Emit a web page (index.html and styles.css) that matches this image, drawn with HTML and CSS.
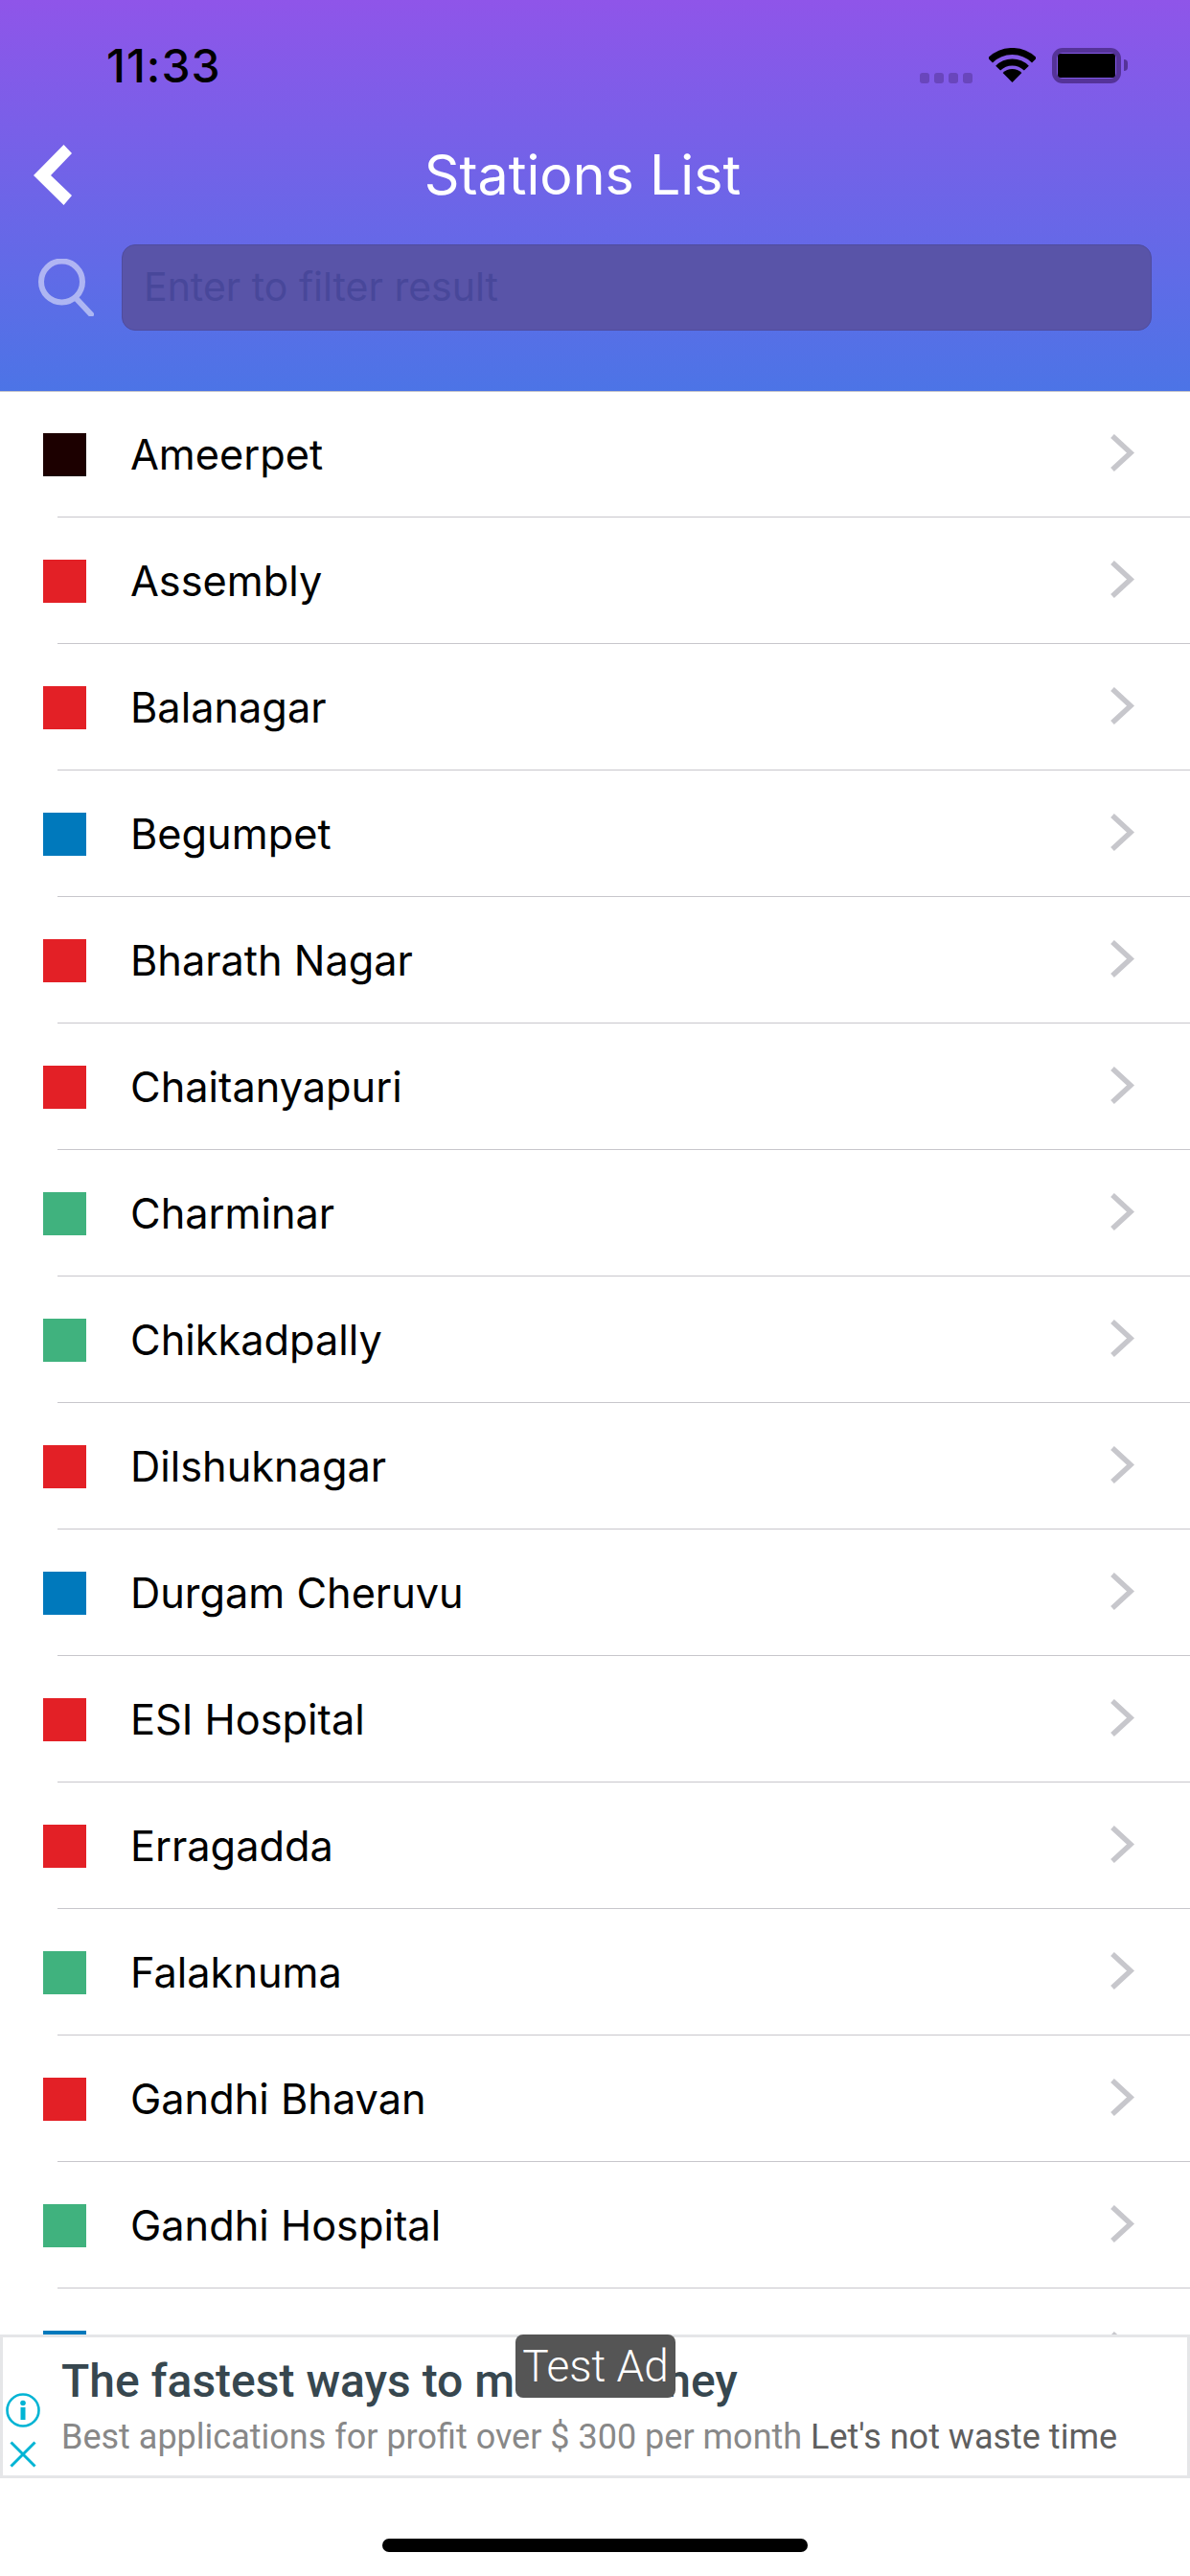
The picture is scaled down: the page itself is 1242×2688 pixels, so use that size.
FILE: index.html
```html
<!DOCTYPE html>
<html lang="en">

<head>
    <meta charset="UTF-8" />
    <meta name="viewport" content="width=device-width, initial-scale=1" />
    <title>Stations List</title>
    <link rel="stylesheet" href="styles.css">
</head>

<body>
    <div class="screen">
        <header class="top">
            <div class="status">
                <span class="time">11:33</span>
                <div class="status-icons">
                    <div class="signal"><i></i><i></i><i></i><i></i></div>
                    <svg class="wifi" width="49" height="36" viewBox="0 0 49 36">
                        <path d="M1.5 13A32.5 32.5 0 0 1 47.5 13" fill="none" stroke="#000" stroke-width="7" />
                        <path d="M9.65 21.15A21 21 0 0 1 39.35 21.15" fill="none" stroke="#000" stroke-width="7" />
                        <path d="M24.5 36L14.6 26.1A14 14 0 0 1 34.4 26.1Z" fill="#000" />
                    </svg>
                    <div class="battery"><div class="battery-fill"></div></div>
                    <div class="battery-nub"></div>
                </div>
            </div>

            <div class="nav">
                <svg class="back" width="40" height="63" viewBox="0 0 40 63">
                    <polygon points="31.5,0 40,9 18,32 40,53 31.5,63 0,32" fill="#fff" />
                </svg>
                <h1>Stations List</h1>
            </div>

            <div class="search">
                <svg class="search-icon" width="58" height="60" viewBox="0 0 58 60">
                    <circle cx="24.5" cy="24" r="21.5" fill="none" stroke="#fff" stroke-width="6" />
                    <path d="M40 42L55 58" fill="none" stroke="#fff" stroke-width="6" stroke-linecap="round" />
                </svg>
                <input type="text" placeholder="Enter to filter result" />
            </div>
        </header>

        <ul class="list">
            <li class="row"><span class="line line-dark"></span><span class="name">Ameerpet</span><svg class="arrow" width="26" height="40" viewBox="0 0 26 40"><path d="M3 2L22 19.5L3 37" /></svg></li>
            <li class="row"><span class="line line-red"></span><span class="name">Assembly</span><svg class="arrow" width="26" height="40" viewBox="0 0 26 40"><path d="M3 2L22 19.5L3 37" /></svg></li>
            <li class="row"><span class="line line-red"></span><span class="name">Balanagar</span><svg class="arrow" width="26" height="40" viewBox="0 0 26 40"><path d="M3 2L22 19.5L3 37" /></svg></li>
            <li class="row"><span class="line line-blue"></span><span class="name">Begumpet</span><svg class="arrow" width="26" height="40" viewBox="0 0 26 40"><path d="M3 2L22 19.5L3 37" /></svg></li>
            <li class="row"><span class="line line-red"></span><span class="name">Bharath Nagar</span><svg class="arrow" width="26" height="40" viewBox="0 0 26 40"><path d="M3 2L22 19.5L3 37" /></svg></li>
            <li class="row"><span class="line line-red"></span><span class="name">Chaitanyapuri</span><svg class="arrow" width="26" height="40" viewBox="0 0 26 40"><path d="M3 2L22 19.5L3 37" /></svg></li>
            <li class="row"><span class="line line-green"></span><span class="name">Charminar</span><svg class="arrow" width="26" height="40" viewBox="0 0 26 40"><path d="M3 2L22 19.5L3 37" /></svg></li>
            <li class="row"><span class="line line-green"></span><span class="name">Chikkadpally</span><svg class="arrow" width="26" height="40" viewBox="0 0 26 40"><path d="M3 2L22 19.5L3 37" /></svg></li>
            <li class="row"><span class="line line-red"></span><span class="name">Dilshuknagar</span><svg class="arrow" width="26" height="40" viewBox="0 0 26 40"><path d="M3 2L22 19.5L3 37" /></svg></li>
            <li class="row"><span class="line line-blue"></span><span class="name">Durgam Cheruvu</span><svg class="arrow" width="26" height="40" viewBox="0 0 26 40"><path d="M3 2L22 19.5L3 37" /></svg></li>
            <li class="row"><span class="line line-red"></span><span class="name">ESI Hospital</span><svg class="arrow" width="26" height="40" viewBox="0 0 26 40"><path d="M3 2L22 19.5L3 37" /></svg></li>
            <li class="row"><span class="line line-red"></span><span class="name">Erragadda</span><svg class="arrow" width="26" height="40" viewBox="0 0 26 40"><path d="M3 2L22 19.5L3 37" /></svg></li>
            <li class="row"><span class="line line-green"></span><span class="name">Falaknuma</span><svg class="arrow" width="26" height="40" viewBox="0 0 26 40"><path d="M3 2L22 19.5L3 37" /></svg></li>
            <li class="row"><span class="line line-red"></span><span class="name">Gandhi Bhavan</span><svg class="arrow" width="26" height="40" viewBox="0 0 26 40"><path d="M3 2L22 19.5L3 37" /></svg></li>
            <li class="row"><span class="line line-green"></span><span class="name">Gandhi Hospital</span><svg class="arrow" width="26" height="40" viewBox="0 0 26 40"><path d="M3 2L22 19.5L3 37" /></svg></li>
            <!-- linha cortada pelo anuncio -->
            <li class="row"><span class="line line-blue"></span><span class="name"></span><svg class="arrow" width="26" height="40" viewBox="0 0 26 40"><path d="M3 2L22 19.5L3 37" /></svg></li>
        </ul>

        <aside class="ad">
            <div class="ad-badge">Test Ad</div>
            <div class="ad-icons">
                <svg width="36" height="36" viewBox="0 0 36 36">
                    <circle cx="18" cy="18" r="16.5" fill="none" stroke="#00b4d4" stroke-width="2.6" />
                    <circle cx="18" cy="10.5" r="2.8" fill="#00b4d4" />
                    <rect x="15.5" y="15" width="5" height="13" fill="#00b4d4" />
                </svg>
                <svg width="28" height="28" viewBox="0 0 28 28">
                    <path d="M1.5 1.5L26.5 26.5M26.5 1.5L1.5 26.5" fill="none" stroke="#00b4d4" stroke-width="3" />
                </svg>
            </div>
            <div class="ad-text">
                <div class="ad-title">The fastest ways to make money</div>
                <div class="ad-sub">Best applications for profit over $ 300 per month <span class="ad-sub-dark">Let's not waste time</span></div>
            </div>
        </aside>

        <div class="home-bar"></div>
    </div>
</body>

</html>
```

FILE: styles.css
```css
* {
    box-sizing: border-box;
}

body {
    margin: 0;
    background: #fff;
    font-family: Inter, "Noto Sans", sans-serif;
}

.screen {
    position: relative;
    width: 1242px;
    height: 2688px;
    overflow: hidden;
    background: #fff;
}

/* ─── Header ─────────────────────────────── */
.top {
    position: relative;
    z-index: 1;
    height: 408px;
    background: linear-gradient(180deg, #8f55e9 0%, #4c74e6 100%);
    box-shadow: 0 1px 0 #c8c8cc;
}

.status {
    display: flex;
    align-items: center;
    justify-content: space-between;
    height: 136px;
    padding: 0 65px 0 111px;
}

.time {
    font-size: 48px;
    font-weight: 500;
    letter-spacing: 1px;
    color: #000;
}

.status-icons {
    display: flex;
    align-items: center;
}

.signal {
    display: flex;
    align-items: flex-end;
    gap: 5px;
    height: 37px;
    margin-right: 17px;
}

.signal i {
    display: block;
    width: 10px;
    height: 11px;
    border-radius: 3px;
    background: #6946bc;
}

.wifi {
    margin-right: 17px;
}

.battery {
    width: 72px;
    height: 37px;
    padding: 1px;
    border: 5px solid #553399;
    border-radius: 11px;
}

.battery-fill {
    width: 100%;
    height: 100%;
    border-radius: 3px;
    background: #000;
}

.battery-nub {
    width: 4px;
    height: 12px;
    margin-left: 3px;
    border-radius: 0 6px 6px 0;
    background: #553399;
}

.nav {
    display: flex;
    align-items: center;
    height: 92px;
    padding: 0 101px 0 35px;
}

.nav h1 {
    flex: 1;
    margin: 0;
    font-size: 57.3px;
    font-weight: 400;
    text-align: center;
    color: #fff;
}

.search {
    display: flex;
    align-items: center;
    gap: 29px;
    margin-top: 27px;
    padding: 0 40px;
}

.search-icon {
    flex: none;
    opacity: 0.5;
}

.search input {
    flex: 1;
    height: 90px;
    padding: 0 22px 3px;
    border: 1px solid #4f4c9e;
    border-radius: 14px;
    outline: none;
    background: #5954a8;
    font-family: Inter, "Noto Sans", sans-serif;
    font-size: 41px;
    color: #48479a;
}

.search input::placeholder {
    color: #48479a;
    opacity: 1;
}

/* ─── Lista ──────────────────────────────── */
.list {
    margin: 0;
    padding: 0;
    list-style: none;
}

.row {
    display: flex;
    align-items: center;
    height: 132px;
    padding: 0 58px 0 45px;
    background: linear-gradient(#c8c7cc, #c8c7cc) 60px 100% / 100% 1px no-repeat;
}

.line {
    flex: none;
    width: 45px;
    height: 45px;
    margin-right: 46px;
}

.line-dark {
    background: #1c0000;
}

.line-red {
    background: #e32026;
}

.line-blue {
    background: #0079bc;
}

.line-green {
    background: #40b27e;
}

.name {
    flex: 1;
    font-size: 43.3px;
    color: #000;
}

.arrow {
    flex: none;
    margin-top: -3px;
}

.arrow path {
    fill: none;
    stroke: #c7c7cc;
    stroke-width: 5.5;
}

/* ─── Anuncio ────────────────────────────── */
.ad {
    position: absolute;
    top: 2436px;
    left: 0;
    display: flex;
    width: 1242px;
    height: 150px;
    border: 3px solid #e5e6e8;
    background: #fff;
}

.ad-badge {
    position: absolute;
    top: -3px;
    left: 535px;
    width: 167px;
    height: 66px;
    border-radius: 8px;
    background: #555;
    font-family: Roboto, sans-serif;
    font-size: 46px;
    font-weight: 300;
    line-height: 66px;
    text-align: center;
    color: #fff;
}

.ad-icons {
    display: flex;
    flex-direction: column;
    align-items: center;
    gap: 14px;
    width: 61px;
    padding: 58px 19px 0 0;
}

.ad-icons svg {
    flex: none;
}

.ad-title {
    margin-top: 18px;
    font-family: Roboto, sans-serif;
    font-size: 48px;
    font-weight: 500;
    line-height: 56px;
    white-space: nowrap;
    color: #37474f;
}

.ad-sub {
    margin-top: 9px;
    font-family: Roboto, sans-serif;
    font-size: 36px;
    line-height: 42px;
    white-space: nowrap;
    color: #888;
}

.ad-sub-dark {
    color: #5f5f5f;
}

.home-bar {
    position: absolute;
    top: 2649px;
    left: 399px;
    width: 444px;
    height: 14px;
    border-radius: 7px;
    background: #000;
}
```
